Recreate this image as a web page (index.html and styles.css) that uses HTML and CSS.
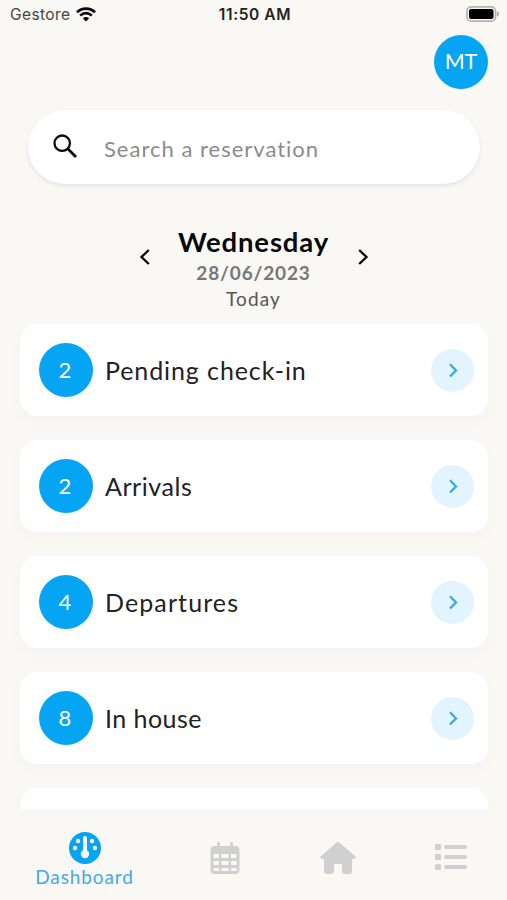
FILE: index.html
```html
<!DOCTYPE html>
<html lang="en">
<head>
<meta charset="utf-8">
<title>Dashboard</title>
<link rel="stylesheet" href="styles.css">
</head>
<body>
<div class="app">
  <header class="status">
    <div class="carrier"><span>Gestore</span>
      <svg width="20" height="15" viewBox="0 0 20 15" fill="none" stroke="#080808" stroke-width="2.7"><path d="M1 5.3C6 .3 14 .3 19 5.3M4.2 8.6C7.5 5.4 12.5 5.4 15.8 8.6"/><path d="M6.800 11.300C8.600 9.500 11.400 9.500 13.200 11.300L10 14.500Z" fill="#080808" stroke="none"/></svg>
    </div>
    <time class="clock">11:50 AM</time>
    <svg class="battery" width="34" height="16" viewBox="0 0 34 16"><rect x="1" y=".9" width="28.5" height="14.2" rx="4.2" fill="none" stroke="#b5b4b1" stroke-width="1.800"/><rect x="3" y="3" width="24.500" height="10" rx="2" fill="#000"/><path d="M31 5.500q2 .8 2 2.500t-2 2.500z" fill="#aaa9a7"/></svg>
  </header>
  <div class="profile"><div class="avatar"><span>MT</span></div></div>
  <div class="search">
    <svg width="24" height="24" viewBox="0 0 24 24" fill="none" stroke="#080808" stroke-width="2.3"><circle cx="9.200" cy="9.200" r="7.700"/><path d="M14.800 14.800l8.200 8.200" stroke-width="2.800"/></svg>
    <span class="hint">Search a reservation</span>
  </div>
  <section class="date">
    <svg width="12" height="18" viewBox="0 0 12 18" fill="none" stroke="#080808" stroke-width="2.300"><path d="M9.800 2L2.500 9l7.300 7"/></svg>
    <div class="day"><h1>Wednesday</h1><strong>28/06/2023</strong><span>Today</span></div>
    <svg width="12" height="18" viewBox="0 0 12 18" fill="none" stroke="#080808" stroke-width="2.300"><path d="M2.200 2l7.300 7-7.300 7"/></svg>
  </section>
  <main class="list">
    <article class="card"><div class="count"><span>2</span></div><span class="label pending">Pending check-in</span><div class="go"><svg width="12" height="18" viewBox="0 0 12 18"><path d="M3 3.200l6 6.200-6 6.200"/></svg></div></article>
    <article class="card"><div class="count"><span>2</span></div><span class="label arrivals">Arrivals</span><div class="go"><svg width="12" height="18" viewBox="0 0 12 18"><path d="M3 3.200l6 6.200-6 6.200"/></svg></div></article>
    <article class="card"><div class="count"><span>4</span></div><span class="label departures">Departures</span><div class="go"><svg width="12" height="18" viewBox="0 0 12 18"><path d="M3 3.200l6 6.200-6 6.200"/></svg></div></article>
    <article class="card"><div class="count"><span>8</span></div><span class="label house">In house</span><div class="go"><svg width="12" height="18" viewBox="0 0 12 18"><path d="M3 3.200l6 6.200-6 6.200"/></svg></div></article>
    <article class="card"></article>
  </main>
  <nav class="tabs">
    <div class="tab active">
      <svg width="32" height="32" viewBox="0 0 32 32"><circle cx="16" cy="16" r="16" fill="#05a5f3"/><g fill="#f9f8f4"><circle cx="9" cy="9" r="2.200"/><circle cx="23" cy="9" r="2.200"/><circle cx="6" cy="16" r="2.200"/><circle cx="26" cy="16" r="2.200"/><circle cx="16" cy="22" r="4.200"/><rect x="14" y="4" width="4" height="18" rx="2"/></g></svg>
      <span>Dashboard</span>
    </div>
    <div class="tab">
      <svg width="30" height="34" viewBox="0 0 30 34"><path fill="#d0d0d0" fill-rule="evenodd" d="M7 2q1.500-2 3 0v3h10V2q1.500-2 3 0v3h2.500Q29.500 5 29.500 9v20q0 4-4 4h-21q-4 0-4-4V9q0-4 4-4H7zM3.500 13v4h5.500v-4zM11.500 13v4h7v-4zM21 13v4h5.500v-4zM3.500 20v4h5.500v-4zM11.500 20v4h7v-4zM21 20v4h5.500v-4zM3.500 27v2q0 1 1 1h4.500v-3zM11.500 27v3h7v-3zM21 27v3h4.500q1 0 1-1v-2z"/></svg>
    </div>
    <div class="tab">
      <svg width="36" height="34" viewBox="0 0 36 34"><path d="M16.600 1.500q1.400-1.200 2.800 0L35 15q1.500 1.800-.7 3H32v12q0 3-3 3h-4q-3 0-3-3v-6q0-1-1-1h-6q-1 0-1 1v6q0 3-3 3H7q-3 0-3-3V18H1.700Q-.5 16.800 1 15z" fill="#d0d0d0"/></svg>
    </div>
    <div class="tab">
      <svg width="32" height="28" viewBox="0 0 32 28" fill="#d0d0d0"><rect x="0" y="1" width="6" height="6" rx="1.500"/><rect x="0" y="11" width="6" height="6" rx="1.500"/><rect x="0" y="21" width="6" height="6" rx="1.500"/><rect x="9" y="2" width="23" height="4" rx="2"/><rect x="9" y="12" width="23" height="4" rx="2"/><rect x="9" y="22" width="23" height="4" rx="2"/></svg>
    </div>
  </nav>
</div>
</body>
</html>
```
FILE: styles.css
```css
* { box-sizing: border-box; }
body { margin: 0; background: #f9f8f4; font-family: Lato, "Liberation Sans", sans-serif; color: #222; }
svg { display: block; flex: none; }
.app { width: 507px; height: 900px; overflow: hidden; display: flex; flex-direction: column; }
.status { height: 30px; flex: none; display: grid; grid-template-columns: 1fr auto 1fr; align-items: center; padding: 0 7px 1px 10px; font-family: Inter, sans-serif; }
.carrier { display: flex; align-items: center; gap: 6px; font-size: 15.500px; letter-spacing: .4px; color: #444; }
.clock { font-size: 15.500px; font-weight: 600; letter-spacing: .6px; }
.battery { justify-self: end; margin-top: -1px; }
.profile { height: 80px; flex: none; display: flex; justify-content: flex-end; padding: 5px 19px 0 0; }
.avatar, .count { width: 54px; height: 54px; flex: none; border-radius: 50%; background: #05a5f3; color: #fff; display: flex; align-items: center; justify-content: center; font-size: 22px; }
.avatar span { padding-bottom: 2px; font-size: 21.500px; }
.count span { padding: 0 2px 1px 0; }
.search { height: 74px; margin: 0 27px 0 28px; flex: none; border-radius: 37px; background: #fff; box-shadow: 0 2px 4px rgba(0,0,0,.09); display: flex; align-items: center; padding: 0 25px 2px; gap: 27px; }
.hint { font-size: 22px; letter-spacing: 1px; color: #8b8b8b; padding-top: 5px; }
.date { height: 140px; flex: none; display: flex; justify-content: center; align-items: flex-start; padding-top: 43px; }
.date svg { margin-top: 21px; }
.day { width: 206px; display: flex; flex-direction: column; align-items: center; }
.day h1 { margin: -1px 0 1px; font-size: 27.500px; line-height: 32px; color: #080808; letter-spacing: .85px; }
.day strong { font-size: 19px; line-height: 28px; color: #777; letter-spacing: .85px; }
.day span { margin-top: -1px; font-size: 19px; line-height: 25px; color: #555; letter-spacing: 1.100px; }
.list { height: 485px; flex: none; overflow: hidden; padding: 0 19px 0 20px; display: flex; flex-direction: column; gap: 24px; }
.card { height: 92px; flex: none; border-radius: 17px; background: #fff; box-shadow: 0 6px 14px rgba(80,50,30,.025); display: flex; align-items: center; padding: 0 14px 0 19px; }
.label { margin-left: 12px; font-size: 25px; letter-spacing: .9px; }
.arrivals { letter-spacing: .55px; }
.departures { letter-spacing: 1.100px; }
.house { letter-spacing: .45px; }
.go { width: 43px; height: 43px; margin-left: auto; border-radius: 50%; background: #e1f4ff; display: flex; align-items: center; justify-content: center; }
.go path { fill: none; stroke: #36a7e6; stroke-width: 2.200; }
.tabs { flex: 1; display: grid; grid-template-columns: 169px 112px 113px 113px; }
.tab { display: flex; justify-content: center; padding-top: 32px; }
.tab:last-child { padding-top: 34px; }
.tab.active { flex-direction: column; align-items: center; justify-content: flex-start; padding-top: 23px; color: #42aae9; }
.active span { font-size: 19px; line-height: 26px; letter-spacing: .9px; }
```
